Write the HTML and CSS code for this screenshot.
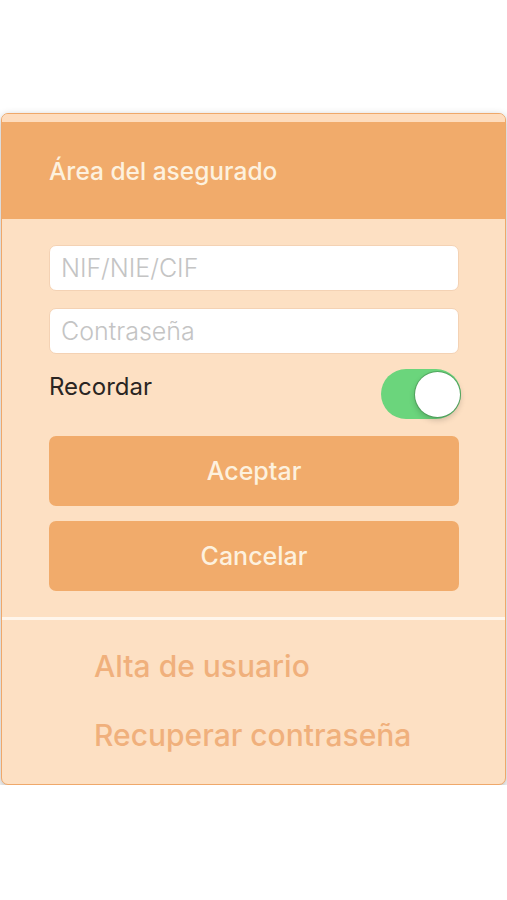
FILE: index.html
```html
<!DOCTYPE html>
<html lang="es">
<head>
<meta charset="utf-8">
<title>Área del asegurado</title>
<link rel="stylesheet" href="styles.css">
</head>
<body>
<div class="card">
  <div class="strip"></div>
  <div class="header">Área del asegurado</div>
  <div class="form">
    <div class="input">NIF/NIE/CIF</div>
    <div class="input">Contraseña</div>
    <div class="remember">
      <span class="label">Recordar</span>
      <span class="toggle"><span class="knob"></span></span>
    </div>
    <div class="btn">Aceptar</div>
    <div class="btn">Cancelar</div>
  </div>
  <div class="sep"></div>
  <div class="links">
    <div class="link">Alta de usuario</div>
    <div class="link">Recuperar contraseña</div>
  </div>
</div>
</body>
</html>
```
FILE: styles.css
```css
html, body {
  margin: 0;
  padding: 0;
  background: #ffffff;
}
body {
  font-family: Inter, "Noto Sans", sans-serif;
  padding-top: 113px;
}
.card {
  margin: 0 1px;
  border: 1.5px solid #efa86a;
  border-radius: 7px;
  background: #fde0c3;
  box-shadow: 0 3px 8px rgba(0, 0, 0, 0.3);
  overflow: hidden;
}
.strip {
  height: 8px;
  background: #fedcbd;
}
.header {
  height: 97px;
  background: #f1ab6b;
  color: #fdf1de;
  font-size: 24.5px;
  font-weight: 500;
  display: flex;
  align-items: center;
  padding-left: 47px;
}
.form {
  padding: 26px 46px 0 47px;
  display: flex;
  flex-direction: column;
}
.input {
  height: 46px;
  background: #ffffff;
  border: 1px solid #f4d2b4;
  border-radius: 7px;
  box-sizing: border-box;
  display: flex;
  align-items: center;
  padding-left: 11px;
  font-size: 25px;
  font-weight: 300;
  color: #c4c4c4;
  margin-bottom: 17px;
}
.remember {
  display: flex;
  justify-content: space-between;
  align-items: flex-start;
  margin-top: -3px;
  height: 68px;
}
.label {
  font-size: 24px;
  color: #2a2522;
  margin-top: 4px;
}
.toggle {
  width: 80px;
  height: 50px;
  border-radius: 25px;
  background: #6bd57c;
  position: relative;
  margin-right: -2px;
  margin-top: 1px;
}
.knob {
  position: absolute;
  right: 1px;
  top: 3px;
  width: 45px;
  height: 45px;
  border-radius: 50%;
  background: #ffffff;
  box-shadow: 0 0 0 1px rgba(70, 140, 80, 0.6), 0 3px 6px rgba(0, 0, 0, 0.2);
}
.btn {
  height: 70px;
  border-radius: 7px;
  background: #f1ab6b;
  color: #fdf1de;
  font-size: 25px;
  font-weight: 500;
  display: flex;
  align-items: center;
  justify-content: center;
  margin-bottom: 15px;
}
.sep {
  margin-top: 11px;
  height: 3px;
  background: #fff6ec;
}
.links {
  padding: 28px 0 31px 92px;
  display: flex;
  flex-direction: column;
  gap: 33px;
}
.link {
  font-size: 30px;
  font-weight: 500;
  color: #f0b07c;
  line-height: 36px;
}
```
